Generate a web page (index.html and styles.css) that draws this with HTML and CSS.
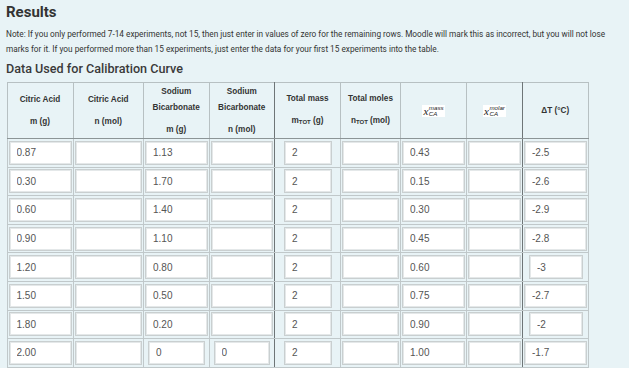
FILE: index.html
```html
<!DOCTYPE html>
<html>
<head>
<meta charset="utf-8">
<link rel="stylesheet" href="styles.css">
</head>
<body>
<h2 class="title">Results</h2>
<p class="note">Note: If you only performed 7-14 experiments, not 15, then just enter in values of zero for the remaining rows. Moodle will mark this as incorrect, but you will not lose marks for it. If you performed more than 15 experiments, just enter the data for your first 15 experiments into the table.</p>
<h3 class="subtitle">Data Used for Calibration Curve</h3>
<table class="data">
  <colgroup>
    <col class="c1"><col class="c2"><col class="c3"><col class="c4"><col class="c5"><col class="c6"><col class="c7"><col class="c8"><col class="c9">
  </colgroup>
  <thead>
    <tr>
      <th><div class="t">Citric Acid</div><div class="u">m (g)</div></th>
      <th><div class="t">Citric Acid</div><div class="u">n (mol)</div></th>
      <th><div class="t">Sodium<br>Bicarbonate</div><div class="u">m (g)</div></th>
      <th class="sep"><div class="t">Sodium<br>Bicarbonate</div><div class="u">n (mol)</div></th>
      <th><div class="t">Total mass</div><div class="u">m<span class="sub">TOT</span> (g)</div></th>
      <th><div class="t">Total moles</div><div class="u">n<span class="sub">TOT</span> (mol)</div></th>
      <th><span class="math"><i class="x">x</i><span class="ss"><span class="sp">mass</span><span class="sb">CA</span></span></span></th>
      <th class="sep"><span class="math"><i class="x">x</i><span class="ss"><span class="sp">molar</span><span class="sb">CA</span></span></span></th>
      <th><div class="t">ΔT (°C)</div></th>
    </tr>
  </thead>
  <tbody>
    <tr>
      <td><input value="0.87"></td><td><input></td><td><input value="1.13"></td><td class="sep"><input></td>
      <td class="pad"><input value="2"></td><td><input></td><td><input value="0.43"></td><td class="sep"><input></td><td><input value="-2.5"></td>
    </tr>
    <tr>
      <td><input value="0.30"></td><td><input></td><td><input value="1.70"></td><td class="sep"><input></td>
      <td class="pad"><input value="2"></td><td><input></td><td><input value="0.15"></td><td class="sep"><input></td><td><input value="-2.6"></td>
    </tr>
    <tr>
      <td><input value="0.60"></td><td><input></td><td><input value="1.40"></td><td class="sep"><input></td>
      <td class="pad"><input value="2"></td><td><input></td><td><input value="0.30"></td><td class="sep"><input></td><td><input value="-2.9"></td>
    </tr>
    <tr>
      <td><input value="0.90"></td><td><input></td><td><input value="1.10"></td><td class="sep"><input></td>
      <td class="pad"><input value="2"></td><td><input></td><td><input value="0.45"></td><td class="sep"><input></td><td><input value="-2.8"></td>
    </tr>
    <tr class="group">
      <td><input value="1.20"></td><td><input></td><td><input value="0.80"></td><td class="sep"><input></td>
      <td class="pad"><input value="2"></td><td><input></td><td><input value="0.60"></td><td class="sep"><input></td><td class="pad2"><input value="-3"></td>
    </tr>
    <tr>
      <td><input value="1.50"></td><td><input></td><td><input value="0.50"></td><td class="sep"><input></td>
      <td class="pad"><input value="2"></td><td><input></td><td><input value="0.75"></td><td class="sep"><input></td><td><input value="-2.7"></td>
    </tr>
    <tr>
      <td><input value="1.80"></td><td><input></td><td><input value="0.20"></td><td class="sep"><input></td>
      <td class="pad"><input value="2"></td><td><input></td><td><input value="0.90"></td><td class="sep"><input></td><td class="pad2"><input value="-2"></td>
    </tr>
    <tr>
      <td><input value="2.00"></td><td><input></td><td class="pads"><input value="0"></td><td class="sep pads"><input value="0"></td>
      <td class="pad"><input value="2"></td><td><input></td><td><input value="1.00"></td><td class="sep"><input></td><td><input value="-1.7"></td>
    </tr>
    <tr>
      <td><input></td><td><input></td><td><input></td><td class="sep"><input></td>
      <td class="pad"><input></td><td><input></td><td><input></td><td class="sep"><input></td><td><input></td>
    </tr>
  </tbody>
</table>
</body>
</html>
```
FILE: styles.css
```css
html, body {
  margin: 0;
  padding: 0;
  background: #e8f3f6;
}
body {
  padding: 0 6px;
  font-family: Roboto, "Liberation Sans", sans-serif;
  color: #333;
}
.title {
  margin: 0;
  padding-top: 1px;
  font-size: 15px;
  font-weight: 700;
  line-height: 22px;
  color: #333;
}
.note {
  margin: 4px 0 0;
  font-size: 8.25px;
  line-height: 15px;
  color: #333;
}
.subtitle {
  margin: 3px 0 0;
  font-size: 12.6px;
  font-weight: 500;
  line-height: 18px;
  color: #3a3a3a;
}
.data {
  margin-top: 4px;
  margin-left: 0.5px;
  border-collapse: collapse;
  table-layout: fixed;
  width: 581px;
  font-family: "Liberation Sans", Arial, sans-serif;
  border: 1px solid #a9b2b4;
}
.c1 { width: 66px; }
.c2 { width: 70.5px; }
.c3 { width: 65.5px; }
.c4 { width: 65.5px; }
.c5 { width: 66px; }
.c6 { width: 60px; }
.c7 { width: 66px; }
.c8 { width: 56px; }
.c9 { width: 65.5px; }
.data th {
  height: 55px;
  padding: 0 2px;
  border: 1px solid #b7c0c2;
  border-bottom: 1px solid #8c9496;
  font-size: 8.2px;
  font-weight: 700;
  color: #333;
  text-align: center;
  vertical-align: middle;
}
.data th .t { line-height: 15.5px; }
.data th .u { line-height: 15.5px; margin-top: 6.5px; }
.sub {
  font-size: 6px;
  vertical-align: -1px;
}
.math {
  display: inline-flex;
  align-items: center;
  background: #fff;
  padding: 0 1px;
  height: 12px;
  font-family: "Liberation Serif", serif;
  font-weight: 400;
  color: #222;
}
.math .x {
  font-size: 11px;
  font-style: italic;
  line-height: 12px;
}
.math .ss {
  display: inline-flex;
  flex-direction: column;
  font-family: "Liberation Sans", sans-serif;
  font-style: italic;
  font-size: 6.2px;
  line-height: 5.6px;
  margin-left: 0.5px;
  text-align: left;
}
.data .sep { border-right: 1px solid #6e7577; }
.data td {
  padding: 1.8px 1px;
  border: 1px solid #c0c8ca;
  vertical-align: middle;
}
.data tr.group td { border-top: 1px solid #7d8587; }
.data td.sep { border-right: 1px solid #6e7577; }
.data td.pad { padding-left: 9px; padding-right: 8px; }
.data td.pad2 { padding-left: 6px; padding-right: 5px; }
.data td.pads { padding-left: 4px; padding-right: 4px; }
.data input {
  display: block;
  box-sizing: border-box;
  width: 100%;
  height: 24px;
  margin: 0;
  padding: 0 0 0 7px;
  border: 1px solid #c9cfd0;
  box-shadow: inset 0 0 0 1px #e4e8e9;
  background: #fff;
  font-family: "Liberation Sans", Arial, sans-serif;
  font-size: 10px;
  color: #555;
  outline: none;
}
```
